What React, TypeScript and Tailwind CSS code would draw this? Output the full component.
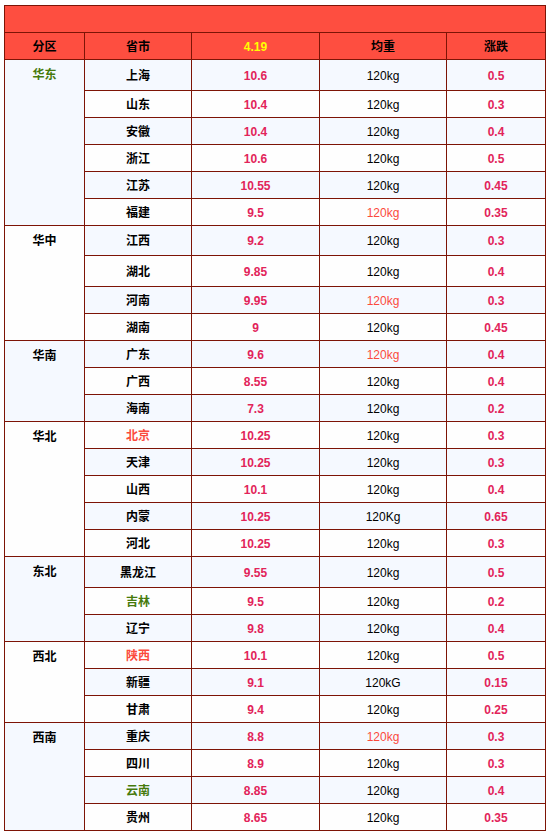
import React from 'react'

type Row = {
  name: string
  price: string
  weight?: string
  change: string
  h: string
  nameColor?: string
  weightColor?: string
}

type Group = {
  region: string
  span: string
  color?: string
  rows: Row[]
}

const RED_TEXT = 'text-[#fb4a3c]'
const GREEN_TEXT = 'text-[#467a0c]'

const groups: Group[] = [
  {
    region: '华东',
    span: 'row-span-6',
    color: GREEN_TEXT,
    rows: [
      { name: '上海', price: '10.6', change: '0.5', h: 'h-[30px]' },
      { name: '山东', price: '10.4', change: '0.3', h: 'h-[26px]' },
      { name: '安徽', price: '10.4', change: '0.4', h: 'h-[26px]' },
      { name: '浙江', price: '10.6', change: '0.5', h: 'h-[26px]' },
      { name: '江苏', price: '10.55', change: '0.45', h: 'h-[26px]' },
      { name: '福建', price: '9.5', change: '0.35', h: 'h-[26px]', weightColor: RED_TEXT },
    ],
  },
  {
    region: '华中',
    span: 'row-span-4',
    rows: [
      { name: '江西', price: '9.2', change: '0.3', h: 'h-[29px]' },
      { name: '湖北', price: '9.85', change: '0.4', h: 'h-[30px]' },
      { name: '河南', price: '9.95', change: '0.3', h: 'h-[26px]', weightColor: RED_TEXT },
      { name: '湖南', price: '9', change: '0.45', h: 'h-[26px]' },
    ],
  },
  {
    region: '华南',
    span: 'row-span-3',
    rows: [
      { name: '广东', price: '9.6', change: '0.4', h: 'h-[26px]', weightColor: RED_TEXT },
      { name: '广西', price: '8.55', change: '0.4', h: 'h-[26px]' },
      { name: '海南', price: '7.3', change: '0.2', h: 'h-[26px]' },
    ],
  },
  {
    region: '华北',
    span: 'row-span-5',
    rows: [
      { name: '北京', price: '10.25', change: '0.3', h: 'h-[26px]', nameColor: RED_TEXT },
      { name: '天津', price: '10.25', change: '0.3', h: 'h-[26px]' },
      { name: '山西', price: '10.1', change: '0.4', h: 'h-[26px]' },
      { name: '内蒙', price: '10.25', weight: '120Kg', change: '0.65', h: 'h-[26px]' },
      { name: '河北', price: '10.25', change: '0.3', h: 'h-[26px]' },
    ],
  },
  {
    region: '东北',
    span: 'row-span-3',
    rows: [
      { name: '黑龙江', price: '9.55', change: '0.5', h: 'h-[30px]' },
      { name: '吉林', price: '9.5', change: '0.2', h: 'h-[26px]', nameColor: GREEN_TEXT },
      { name: '辽宁', price: '9.8', change: '0.4', h: 'h-[26px]' },
    ],
  },
  {
    region: '西北',
    span: 'row-span-3',
    rows: [
      { name: '陕西', price: '10.1', change: '0.5', h: 'h-[26px]', nameColor: RED_TEXT },
      { name: '新疆', price: '9.1', weight: '120kG', change: '0.15', h: 'h-[26px]' },
      { name: '甘肃', price: '9.4', change: '0.25', h: 'h-[26px]' },
    ],
  },
  {
    region: '西南',
    span: 'row-span-4',
    rows: [
      { name: '重庆', price: '8.8', change: '0.3', h: 'h-[26px]', weightColor: RED_TEXT },
      { name: '四川', price: '8.9', change: '0.3', h: 'h-[26px]' },
      { name: '云南', price: '8.85', change: '0.4', h: 'h-[26px]', nameColor: GREEN_TEXT },
      { name: '贵州', price: '8.65', change: '0.35', h: 'h-[26px]' },
    ],
  },
]

const BLUE_BG = 'bg-[#f5f9ff]'
const WHITE_BG = 'bg-[#fefefe]'

export default function App() {
  let rowIndex = 0

  return (
    <div
      className="w-[552px] min-h-[835px] bg-white pl-[4px] pt-[5px] text-[12px] leading-[18px] text-black"
      style={{ fontFamily: '"Liberation Sans", "Noto Sans CJK SC", sans-serif' }}
    >
      <div className="grid w-[542px] grid-cols-[79px_106px_127px_126px_98px] gap-px bg-[#7d1406] p-px">
        {/* title bar */}
        <div className="col-span-5 h-[26px] bg-[#fe4e40]" />

        {/* header */}
        <div className="flex h-[26px] items-center justify-center bg-[#fe4e40] pt-px font-semibold">分区</div>
        <div className="flex items-center justify-center bg-[#fe4e40] pt-px font-semibold">省市</div>
        <div className="flex items-center justify-center bg-[#fe4e40] pt-px font-bold text-[#ffff00]">4.19</div>
        <div className="flex items-center justify-center bg-[#fe4e40] pt-px font-semibold">均重</div>
        <div className="flex items-center justify-center bg-[#fe4e40] pt-px font-semibold">涨跌</div>

        {groups.map((g, gi) => (
          <React.Fragment key={g.region}>
            <div
              className={`col-start-1 ${g.span} ${gi % 2 === 0 ? BLUE_BG : WHITE_BG} pt-[6px] text-center font-semibold ${g.color ?? ''}`}
            >
              {g.region}
            </div>
            {g.rows.map((r) => {
              const bg = rowIndex++ % 2 === 0 ? BLUE_BG : WHITE_BG
              return (
                <React.Fragment key={r.name}>
                  <div className={`col-start-2 flex ${r.h} items-center justify-center ${bg} pt-px font-semibold ${r.nameColor ?? ''}`}>
                    {r.name}
                  </div>
                  <div className={`flex items-center justify-center ${bg} pt-px font-bold text-[#e2245a]`}>{r.price}</div>
                  <div className={`flex items-center justify-center ${bg} pt-px ${r.weightColor ?? ''}`}>{r.weight ?? '120kg'}</div>
                  <div className={`flex items-center justify-center ${bg} pt-px font-bold text-[#e2245a]`}>{r.change}</div>
                </React.Fragment>
              )
            })}
          </React.Fragment>
        ))}
      </div>
    </div>
  )
}
